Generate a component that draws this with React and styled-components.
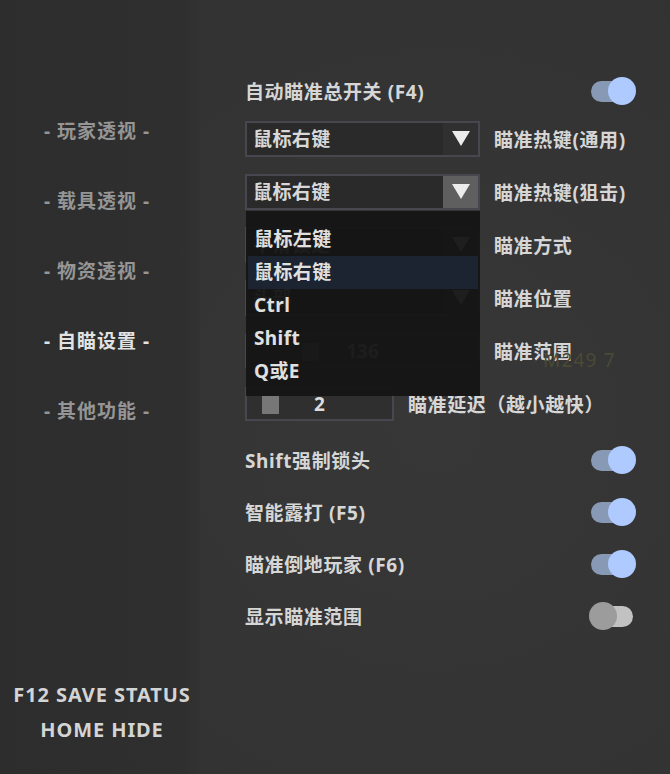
import React from 'react';
import styled, { createGlobalStyle } from 'styled-components';

const GlobalStyle = createGlobalStyle`
  html, body {
    margin: 0;
    padding: 0;
    background: #343434;
  }
  body {
    font-family: 'Noto Sans', 'Noto Sans CJK SC', sans-serif;
  }
`;

const Frame = styled.div`
  width: 670px;
  height: 774px;
  display: flex;
  background: radial-gradient(ellipse at 65% 55%, #373737 0%, #333333 70%, #313131 100%);
  color: #d8d8d8;
  overflow: hidden;
`;

const Sidebar = styled.div`
  width: 200px;
  flex: 0 0 200px;
  background: linear-gradient(90deg, #2d2d2d 0%, #2f2f2f 90%, #323232 100%);
  display: flex;
  flex-direction: column;
  align-items: center;
  padding-top: 117px;
  box-sizing: border-box;
`;

const NavItem = styled.div`
  height: 28px;
  line-height: 28px;
  margin-bottom: 42px;
  font-size: 19px;
  font-weight: 700;
  letter-spacing: 1px;
  color: ${(p) => (p.$active ? '#e2e2e2' : '#959595')};
  white-space: pre;
  margin-left: -6px;
`;

const Footer = styled.div`
  margin-top: auto;
  margin-bottom: 30px;
  display: flex;
  flex-direction: column;
  align-items: center;
  gap: 7px;
  font-size: 20px;
  font-weight: 700;
  letter-spacing: 0.9px;
  color: #d4d4d4;
  line-height: 28px;
  margin-left: 4px;
`;

const Main = styled.div`
  flex: 1;
  padding: 73px 0 0 45px;
  display: flex;
  flex-direction: column;
`;

const Group = styled.div`
  display: flex;
  flex-direction: column;
  gap: ${(p) => p.$gap}px;
  margin-top: ${(p) => p.$top || 0}px;
`;

const Row = styled.div`
  position: relative;
  height: 36px;
  display: flex;
  align-items: center;
`;

const ToggleRow = styled(Row)`
  width: 392px;
  justify-content: space-between;
`;

const Label = styled.span`
  font-size: 19px;
  font-weight: 700;
  letter-spacing: 0.6px;
  color: #d6d6d6;
  white-space: pre;
  margin-left: ${(p) => p.$offset || 0}px;
`;

const SelectBox = styled.div`
  position: relative;
  width: 235px;
  height: 36px;
  box-sizing: border-box;
  border: 2px solid #48464e;
  display: flex;
  background: #2a2a2a;
`;

const SelectText = styled.div`
  flex: 1;
  padding-left: 6px;
  font-size: 19px;
  font-weight: 700;
  letter-spacing: 0.4px;
  line-height: 32px;
  color: #d8d8d8;
`;

const ArrowCell = styled.div`
  width: 35px;
  display: flex;
  align-items: center;
  justify-content: center;
  background: ${(p) => (p.$open ? '#5f5f5f' : '#303030')};
`;

const Triangle = styled.div`
  width: 0;
  height: 0;
  border-left: 9px solid transparent;
  border-right: 9px solid transparent;
  border-top: 15px solid #ececec;
  margin-top: -2px;
`;

const SliderBox = styled.div`
  position: relative;
  width: ${(p) => p.$width}px;
  height: 34px;
  box-sizing: border-box;
  border: 2px solid #48464e;
  background: #2f2f2f;
  display: flex;
  align-items: center;
  justify-content: center;
  font-size: 19px;
  font-weight: 700;
  color: #dcdcdc;
`;

const Thumb = styled.div`
  position: absolute;
  top: 7px;
  width: 17px;
  height: 18px;
  background: #777777;
`;

const Watermark = styled.span`
  position: absolute;
  left: 298px;
  top: 14px;
  font-size: 19px;
  font-weight: 400;
  color: #4a4a34;
  letter-spacing: 1.2px;
  white-space: pre;
`;

const Popup = styled.div`
  position: absolute;
  left: -1px;
  top: 35px;
  width: 234px;
  height: 185px;
  box-sizing: border-box;
  padding: 12px 2px 0 2px;
  background: rgba(21, 21, 21, 0.96);
  z-index: 5;
`;

const Option = styled.div`
  height: 33px;
  line-height: 33px;
  padding-left: 6px;
  font-size: 19px;
  font-weight: 700;
  letter-spacing: 0.4px;
  color: #e0e0e0;
  background: ${(p) => (p.$selected ? '#1c2331' : 'transparent')};
`;

const Switch = styled.div`
  position: relative;
  width: 42px;
  height: 21px;
  border-radius: 11px;
  margin-right: 4px;
  background: ${(p) => (p.$on ? '#8799b4' : '#c2c2c2')};
`;

const Knob = styled.div`
  position: absolute;
  top: -4px;
  left: ${(p) => (p.$on ? '17px' : '-2px')};
  width: 28px;
  height: 28px;
  border-radius: 50%;
  background: ${(p) => (p.$on ? '#aecaff' : '#9c9c9c')};
`;

const navItems = ['玩家透视', '载具透视', '物资透视', '自瞄设置', '其他功能'];
const options = ['鼠标左键', '鼠标右键', 'Ctrl', 'Shift', 'Q或E'];

function Toggle({ on }) {
  return (
    <Switch $on={on}>
      <Knob $on={on} />
    </Switch>
  );
}

function Select({ value, open, children }) {
  return (
    <SelectBox>
      <SelectText>{value}</SelectText>
      <ArrowCell $open={open}>
        <Triangle />
      </ArrowCell>
      {children}
    </SelectBox>
  );
}

export default function App() {
  return (
    <>
      <GlobalStyle />
      <Frame>
        <Sidebar>
          {navItems.map((item, i) => (
            <NavItem key={item} $active={i === 3}>
              {`- ${item} -`}
            </NavItem>
          ))}
          <Footer>
            <div>F12 SAVE STATUS</div>
            <div>HOME HIDE</div>
          </Footer>
        </Sidebar>

        <Main>
          <ToggleRow>
            <Label>自动瞄准总开关 (F4)</Label>
            <Toggle on />
          </ToggleRow>

          <Group $gap={17} $top={12}>
            <Row>
              <Select value='鼠标右键' />
              <Label $offset={14}>瞄准热键(通用)</Label>
            </Row>
            <Row style={{ zIndex: 3 }}>
              <Select value='鼠标右键' open>
                <Popup>
                  {options.map((o) => (
                    <Option key={o} $selected={o === '鼠标右键'}>
                      {o}
                    </Option>
                  ))}
                </Popup>
              </Select>
              <Label $offset={14}>瞄准热键(狙击)</Label>
            </Row>
            <Row>
              <Select value='平滑锁定' />
              <Label $offset={14}>瞄准方式</Label>
            </Row>
            <Row>
              <Select value='头部' />
              <Label $offset={14}>瞄准位置</Label>
            </Row>
            <Row>
              <SliderBox $width={235}>
                <Thumb style={{ left: 55 }} />
                136
              </SliderBox>
              <Label $offset={14}>瞄准范围</Label>
              <Watermark>M249 7</Watermark>
            </Row>
            <Row>
              <SliderBox $width={149}>
                <Thumb style={{ left: 15 }} />2
              </SliderBox>
              <Label $offset={14}>瞄准延迟（越小越快）</Label>
            </Row>
          </Group>

          <Group $gap={16} $top={20}>
            <ToggleRow>
              <Label>Shift强制锁头</Label>
              <Toggle on />
            </ToggleRow>
            <ToggleRow>
              <Label>智能露打 (F5)</Label>
              <Toggle on />
            </ToggleRow>
            <ToggleRow>
              <Label>瞄准倒地玩家 (F6)</Label>
              <Toggle on />
            </ToggleRow>
            <ToggleRow>
              <Label>显示瞄准范围</Label>
              <Toggle on={false} />
            </ToggleRow>
          </Group>
        </Main>
      </Frame>
    </>
  );
}
